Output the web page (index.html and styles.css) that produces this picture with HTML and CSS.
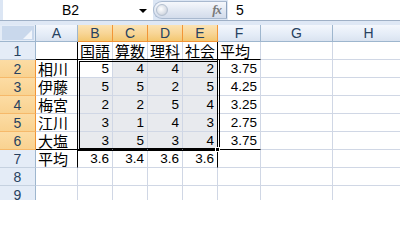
FILE: index.html
```html
<!DOCTYPE html>
<html lang="ja">
<head>
<meta charset="utf-8">
<link rel="stylesheet" href="styles.css">
</head>
<body>
<div class="fbar">
  <div class="namebox"><span class="nbtext">B2</span><span class="arrow"></span></div>
  <div class="pill"><span class="knob"></span><span class="fx">fx</span></div>
  <div class="input">5</div>
</div>
<div class="band"></div>
<div class="sheet">
  <div class="corner"><svg width="35" height="16" viewBox="0 0 35 16"><rect x="2" y="1" width="32" height="14" fill="#c9d8ec"/><polygon points="32,5 32,14 23,14" fill="#f1f5fb"/></svg></div>
  <div class="hd">A</div>
  <div class="hd sel">B</div>
  <div class="hd sel">C</div>
  <div class="hd sel">D</div>
  <div class="hd sel">E</div>
  <div class="hd">F</div>
  <div class="hd">G</div>
  <div class="hd">H</div>

  <div class="rh">1</div>
  <div class="c bb br"></div>
  <div class="c bb jp">国語</div>
  <div class="c bb jp">算数</div>
  <div class="c bb jp">理科</div>
  <div class="c bb br jp">社会</div>
  <div class="c bb jp">平均</div>
  <div class="c"></div>
  <div class="c"></div>

  <div class="rh sel">2</div>
  <div class="c br jp">相川</div>
  <div class="c num">5</div>
  <div class="c num fill">4</div>
  <div class="c num fill">4</div>
  <div class="c num fill br">2</div>
  <div class="c num">3.75</div>
  <div class="c"></div>
  <div class="c"></div>

  <div class="rh sel">3</div>
  <div class="c br jp">伊藤</div>
  <div class="c num fill">5</div>
  <div class="c num fill">5</div>
  <div class="c num fill">2</div>
  <div class="c num fill br">5</div>
  <div class="c num">4.25</div>
  <div class="c"></div>
  <div class="c"></div>

  <div class="rh sel">4</div>
  <div class="c br jp">梅宮</div>
  <div class="c num fill">2</div>
  <div class="c num fill">2</div>
  <div class="c num fill">5</div>
  <div class="c num fill br">4</div>
  <div class="c num">3.25</div>
  <div class="c"></div>
  <div class="c"></div>

  <div class="rh sel">5</div>
  <div class="c br jp">江川</div>
  <div class="c num fill">3</div>
  <div class="c num fill">1</div>
  <div class="c num fill">4</div>
  <div class="c num fill br">3</div>
  <div class="c num">2.75</div>
  <div class="c"></div>
  <div class="c"></div>

  <div class="rh sel">6</div>
  <div class="c br bb jp">大塩</div>
  <div class="c num fill bb">3</div>
  <div class="c num fill bb">5</div>
  <div class="c num fill bb">3</div>
  <div class="c num fill br bb">4</div>
  <div class="c num bb">3.75</div>
  <div class="c"></div>
  <div class="c"></div>

  <div class="rh">7</div>
  <div class="c br jp">平均</div>
  <div class="c num">3.6</div>
  <div class="c num">3.4</div>
  <div class="c num">3.6</div>
  <div class="c num br">3.6</div>
  <div class="c"></div>
  <div class="c"></div>
  <div class="c"></div>

  <div class="rh">8</div>
  <div class="c"></div><div class="c"></div><div class="c"></div><div class="c"></div><div class="c"></div><div class="c"></div><div class="c"></div><div class="c"></div>

  <div class="rh">9</div>
  <div class="c"></div><div class="c"></div><div class="c"></div><div class="c"></div><div class="c"></div><div class="c"></div><div class="c"></div><div class="c"></div>

  <div class="selection"></div>
  <div class="handle"></div>
</div>
</body>
</html>
```
FILE: styles.css
```css
html, body {
  margin: 0;
  padding: 0;
}
body {
  width: 400px;
  height: 200px;
  overflow: hidden;
  background: #fff;
  font-family: "Liberation Sans", "Noto Sans CJK JP", sans-serif;
  color: #000;
}
.fbar {
  display: flex;
  height: 20px;
  padding-left: 3px;
  background: #dce6f4;
  border-bottom: 1px solid #9fb0c6;
}
.namebox {
  width: 150px;
  background: #fff;
  display: flex;
  align-items: center;
  position: relative;
}
.nbtext {
  font-size: 14px;
  line-height: 16px;
  margin-left: 59px;
  width: 77px;
}
.arrow {
  width: 0;
  height: 0;
  border-left: 4px solid transparent;
  border-right: 4px solid transparent;
  border-top: 4px solid #000;
  margin-top: 1px;
}
.pill {
  width: 74px;
  height: 18px;
  margin-top: 1px;
  box-sizing: border-box;
  border: 1px solid #a9b9cf;
  border-right: 1px solid #8ea2bd;
  border-radius: 9px 0 0 9px;
  background: linear-gradient(#f6f8fc, #e3e9f3 50%, #d3dceb);
  display: flex;
  align-items: center;
  justify-content: space-between;
  padding: 0 5px 0 2px;
}
.knob {
  width: 12px;
  height: 12px;
  box-sizing: border-box;
  border-radius: 50%;
  border: 1px solid #b4c0d0;
  background: radial-gradient(circle at 40% 40%, #ffffff, #d9dee6 60%, #aeb8c6);
}
.fx {
  font-family: "Liberation Serif", serif;
  font-style: italic;
  font-weight: bold;
  font-size: 13px;
  line-height: 14px;
  color: #7a7a7a;
  letter-spacing: -1px;
}
.input {
  flex: 1;
  background: #fff;
  font-size: 14px;
  line-height: 16px;
  display: flex;
  align-items: center;
  padding-left: 8px;
  margin-left: 1px;
}
.band {
  height: 4px;
  background: #dfe8f5;
}
.sheet {
  display: grid;
  grid-template-columns: 36px 42px 35px 35px 35px 35px 43px 72px 72px;
  grid-template-rows: 17px repeat(9, 18px);
  position: relative;
}
.sheet > div {
  box-sizing: border-box;
}
.corner {
  background: #e4ecf7;
  border-right: 1px solid #9eb6ce;
  border-bottom: 1px solid #9eb6ce;
  line-height: 0;
}
.hd {
  background: linear-gradient(#f4f7fc, #e4ecf7 60%, #dae3f0);
  border-right: 1px solid #9eb6ce;
  border-bottom: 1px solid #9eb6ce;
  color: #27415f;
  font-size: 14px;
  line-height: 16px;
  display: flex;
  align-items: center;
  justify-content: center;
}
.hd.sel {
  background: linear-gradient(#fbe3b4, #f8d698 50%, #f3c770);
  border-right: 1px solid #f29536;
  border-bottom: 1px solid #f29536;
}
.rh {
  background: #e4ecf7;
  border-right: 1px solid #9eb6ce;
  border-bottom: 1px solid #c5d1e0;
  color: #27415f;
  font-size: 14px;
  line-height: 16px;
  display: flex;
  align-items: center;
  justify-content: center;
}
.rh.sel {
  background: linear-gradient(#fcdca4, #f9d290);
  border-right: 1px solid #f29536;
  border-bottom: 1px solid #f6b96a;
}
.c {
  border-right: 1px solid #d0d7e5;
  border-bottom: 1px solid #d0d7e5;
  display: flex;
  align-items: center;
  padding: 0 3px;
  font-size: 14px;
  line-height: 16px;
  white-space: nowrap;
}
.jp {
  font-family: "Noto Sans CJK JP", sans-serif;
  font-size: 15px;
  line-height: 16px;
  padding-left: 2px;
  padding-right: 0;
}
.num {
  justify-content: flex-end;
  font-size: 13.5px;
  padding-right: 3px;
}
.fill {
  background: #e8eaee;
}
.bb {
  border-bottom-color: #000;
}
.br {
  border-right-color: #000;
}
.selection {
  position: absolute;
  left: 77px;
  top: 34px;
  width: 143px;
  height: 92px;
  box-sizing: border-box;
  border: 3px double #000;
  pointer-events: none;
}
.handle {
  position: absolute;
  left: 215px;
  top: 122px;
  width: 5px;
  height: 5px;
  background: #000;
  border: 1px solid #fff;
}
```
